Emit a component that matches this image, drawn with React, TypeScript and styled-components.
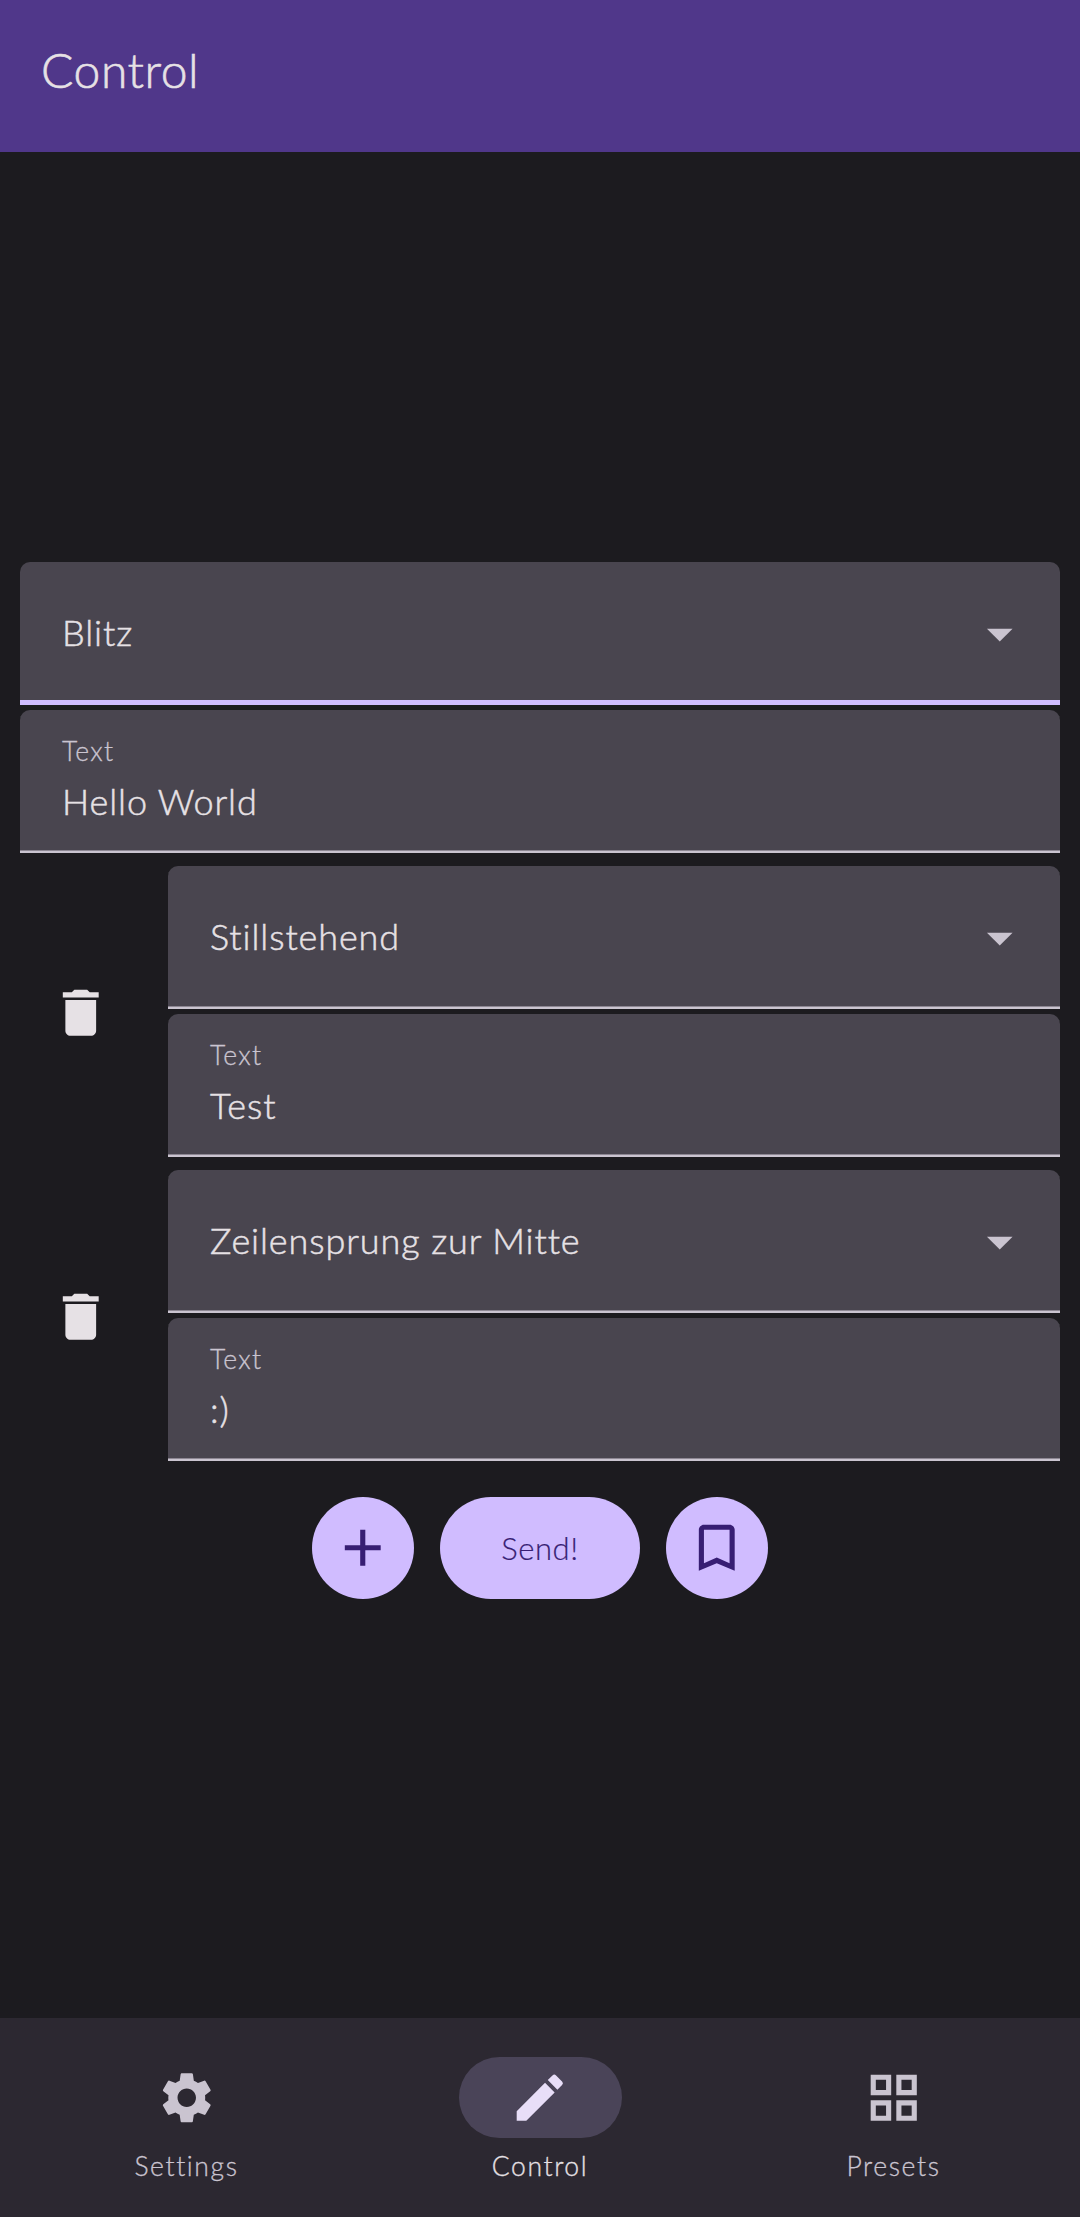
import React from "react";
import styled, { createGlobalStyle } from "styled-components";
import {
  MdAdd,
  MdArrowDropDown,
  MdBookmarkBorder,
  MdDelete,
  MdEdit,
  MdSettings,
} from "react-icons/md";

const color = {
  appBar: "#50378a",
  background: "#1c1b1f",
  field: "#49454f",
  primary: "#d0bcff",
  onPrimary: "#371e73",
  onSurface: "#e6e1e5",
  onSurfaceVariant: "#cac4d0",
  navBar: "#2c2831",
  navPill: "#4a4458",
  onNavPill: "#e8def8",
};

const GlobalStyle = createGlobalStyle`
  *, *::before, *::after { box-sizing: border-box; }
  body {
    margin: 0;
    background: ${color.background};
    color: ${color.onSurface};
    font-family: Lato, "Open Sans", sans-serif;
    font-weight: 300;
  }
  button { margin: 0; padding: 0; border: 0; font: inherit; }
  svg { display: block; flex: none; }
`;

const Screen = styled.div`
  display: flex;
  flex-direction: column;
  width: 1080px;
  height: 2217px;
  overflow: hidden;
`;

const AppBar = styled.header`
  flex: none;
  display: flex;
  height: 152px;
  padding: 40px 41px 0;
  background: ${color.appBar};
`;

const Title = styled.h1`
  margin: 0;
  font-size: 48px;
  line-height: 60px;
  font-weight: 300;
  letter-spacing: 0.55px;
  -webkit-text-stroke: 0.6px currentColor;
`;

const Content = styled.main`
  flex: 1;
  display: flex;
  flex-direction: column;
  justify-content: center;
  gap: 13px;
  padding: 0 20px 9px;
`;

const Effect = styled.section`
  display: flex;
  align-items: center;
  gap: 26px;
`;

const Fields = styled.div`
  flex: 1;
  display: flex;
  flex-direction: column;
  gap: 5px;
`;

const Field = styled.div<{ $focused?: boolean }>`
  display: flex;
  align-items: center;
  height: 143px;
  padding: 0 30px 0 42px;
  border-radius: 10px 10px 0 0;
  background: ${color.field};
  box-shadow: ${({ $focused }) =>
    $focused
      ? `inset 0 -5px ${color.primary}`
      : `inset 0 -2px ${color.onSurfaceVariant}, inset 0 -3px #8d8793`};
`;

const FieldText = styled.div`
  flex: 1;
  display: flex;
  flex-direction: column;
`;

const Label = styled.span`
  margin-top: -1px;
  font-size: 26.5px;
  line-height: 40px;
  letter-spacing: 1.3px;
  color: ${color.onSurfaceVariant};
  -webkit-text-stroke: 0.3px currentColor;
`;

const Value = styled.span<{ $single?: boolean }>`
  font-size: 36px;
  line-height: 61px;
  letter-spacing: 0.9px;
  -webkit-text-stroke: 0.5px currentColor;
  margin-top: ${({ $single }) => ($single ? "-3px" : "0")};
`;

const DeleteButton = styled.button`
  display: grid;
  place-items: center;
  width: 122px;
  height: 122px;
  margin-top: 2px;
  background: none;
  color: ${color.onSurface};
`;

const Actions = styled.div`
  display: flex;
  justify-content: center;
  gap: 26px;
  margin-top: 23px;
`;

const RoundButton = styled.button`
  display: grid;
  place-items: center;
  width: 102px;
  height: 102px;
  border-radius: 51px;
  background: ${color.primary};
  color: ${color.onPrimary};
`;

const SendButton = styled(RoundButton)`
  width: 200px;
  padding-bottom: 1px;
  font-size: 31px;
  letter-spacing: 0.57px;
  -webkit-text-stroke: 0.2px currentColor;
`;

const NavBar = styled.nav`
  flex: none;
  display: flex;
  gap: 20.5px;
  height: 199px;
  padding: 39px 20px 0;
  background: ${color.navBar};
`;

const NavItem = styled.a<{ $active?: boolean }>`
  flex: 1;
  display: flex;
  flex-direction: column;
  align-items: center;
  gap: 9px;
  color: ${({ $active }) => ($active ? color.onSurface : color.onSurfaceVariant)};
`;

const NavIcon = styled.span<{ $active?: boolean }>`
  display: grid;
  place-items: center;
  width: 163px;
  height: 81px;
  border-radius: 41px;
  background: ${({ $active }) => ($active ? color.navPill : "transparent")};
  color: ${({ $active }) => ($active ? color.onNavPill : color.onSurfaceVariant)};
`;

const NavLabel = styled.span`
  font-size: 26.5px;
  line-height: 38px;
  letter-spacing: 1.6px;
  -webkit-text-stroke: 0.3px currentColor;
`;

const ICON = 61.5;

const GridIcon = () => (
  <svg width={ICON} height={ICON} viewBox="0 0 24 24" fill="currentColor" fillRule="evenodd">
    <path d="M3 3h8v8H3zM5 5v4h4V5zM13 3h8v8h-8zM15 5v4h4V5zM3 13h8v8H3zM5 15v4h4v-4zM13 13h8v8h-8zM15 15v4h4v-4z" />
  </svg>
);

interface EffectRowProps {
  mode: string;
  text: string;
  focused?: boolean;
  removable?: boolean;
}

function EffectRow({ mode, text, focused, removable }: EffectRowProps) {
  return (
    <Effect>
      {removable && (
        <DeleteButton aria-label="Delete">
          <MdDelete size={ICON} />
        </DeleteButton>
      )}
      <Fields>
        <Field $focused={focused}>
          <FieldText>
            <Value $single>{mode}</Value>
          </FieldText>
          <MdArrowDropDown size={ICON} color={color.onSurfaceVariant} />
        </Field>
        <Field>
          <FieldText>
            <Label>Text</Label>
            <Value>{text}</Value>
          </FieldText>
        </Field>
      </Fields>
    </Effect>
  );
}

const tabs = [
  { label: "Settings", icon: <MdSettings size={ICON} /> },
  { label: "Control", icon: <MdEdit size={ICON} />, active: true },
  { label: "Presets", icon: <GridIcon /> },
];

export default function App() {
  return (
    <>
      <GlobalStyle />
      <Screen>
        <AppBar>
          <Title>Control</Title>
        </AppBar>
        <Content>
          <EffectRow mode="Blitz" text="Hello World" focused />
          <EffectRow mode="Stillstehend" text="Test" removable />
          <EffectRow mode="Zeilensprung zur Mitte" text=":)" removable />
          <Actions>
            <RoundButton aria-label="Add">
              <MdAdd size={ICON} />
            </RoundButton>
            <SendButton>Send!</SendButton>
            <RoundButton aria-label="Save preset">
              <MdBookmarkBorder size={ICON} />
            </RoundButton>
          </Actions>
        </Content>
        <NavBar>
          {tabs.map(({ label, icon, active }) => (
            <NavItem key={label} $active={active}>
              <NavIcon $active={active}>{icon}</NavIcon>
              <NavLabel>{label}</NavLabel>
            </NavItem>
          ))}
        </NavBar>
      </Screen>
    </>
  );
}
